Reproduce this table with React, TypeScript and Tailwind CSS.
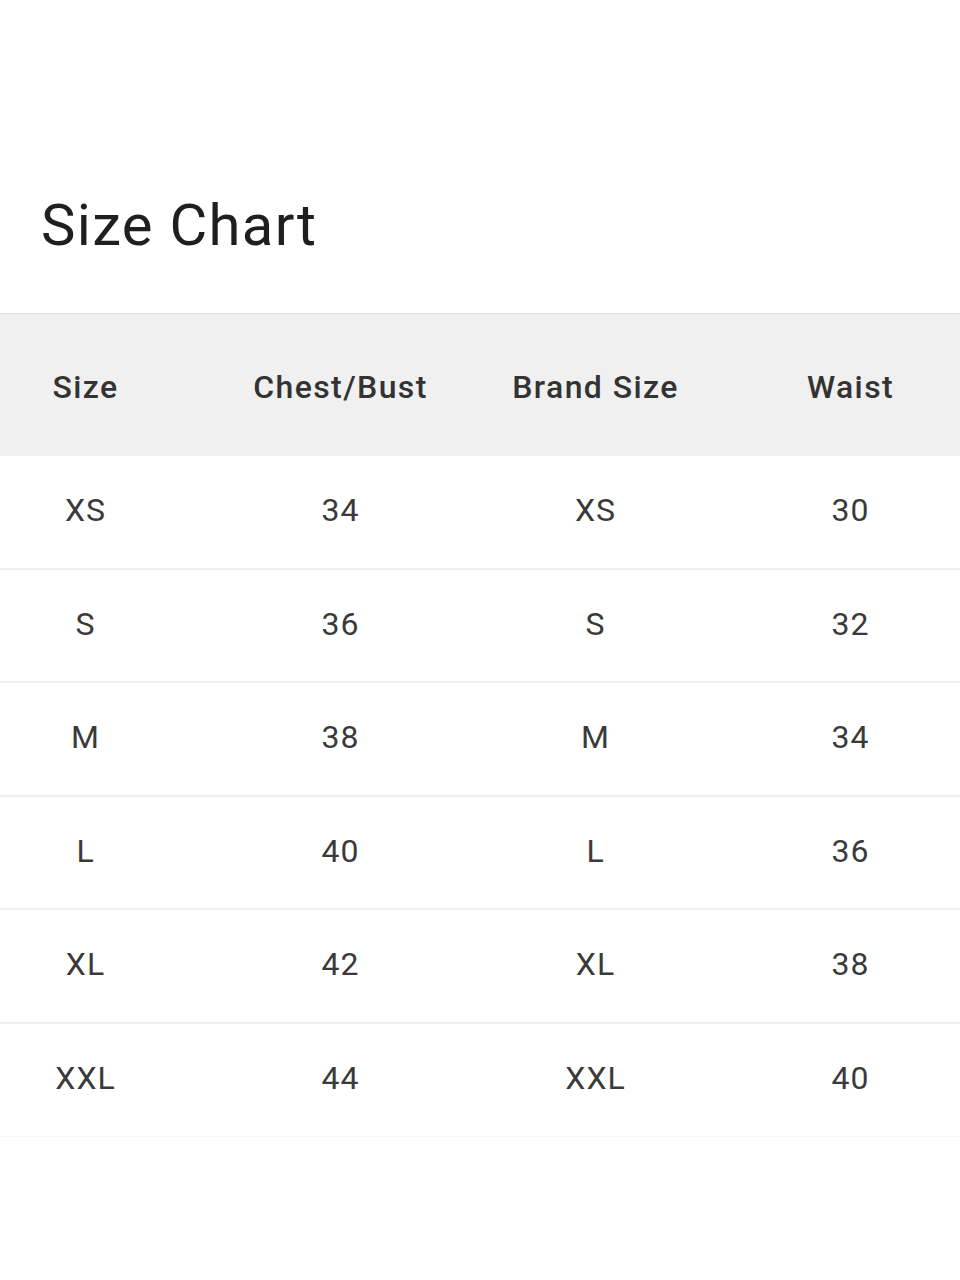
import React from "react";

const headers = ["Size", "Chest/Bust", "Brand Size", "Waist"];
const rows = [
  ["XS", "34", "XS", "30"],
  ["S", "36", "S", "32"],
  ["M", "38", "M", "34"],
  ["L", "40", "L", "36"],
  ["XL", "42", "XL", "38"],
  ["XXL", "44", "XXL", "40"],
];

export default function App() {
  return (
    <div
      className="w-[960px] h-[1280px] bg-white overflow-hidden"
      style={{ fontFamily: "Roboto, 'Noto Sans', sans-serif" }}
    >
      <h1 className="pt-[196px] pl-[41px] text-[58px] leading-none font-normal text-[#1f1f1f] tracking-[1.3px]">
        Size Chart
      </h1>
      <div className="mt-[59px] overflow-hidden">
        <div className="-ml-[42px] w-[1020px]">
          <div className="flex h-[143px] items-center bg-[#f0f0f0] border-t border-[#dedede]">
            {headers.map((h) => (
              <div
                key={h}
                className="w-[255px] pt-[3px] text-center text-[32px] font-medium text-[#333333] tracking-[1.4px]"
              >
                {h}
              </div>
            ))}
          </div>
          {rows.map((r, i) => (
            <div
              key={i}
              className={`flex h-[113.5px] items-center ${
                i < rows.length - 1 ? "border-b-2 border-[#efefef]" : "border-b border-[#f8f8f8]"
              }`}
            >
              {r.map((c, j) => (
                <div
                  key={j}
                  className="w-[255px] pb-[3px] text-center text-[32px] font-normal text-[#3a3a3a] tracking-[1px]"
                >
                  {c}
                </div>
              ))}
            </div>
          ))}
        </div>
      </div>
    </div>
  );
}
